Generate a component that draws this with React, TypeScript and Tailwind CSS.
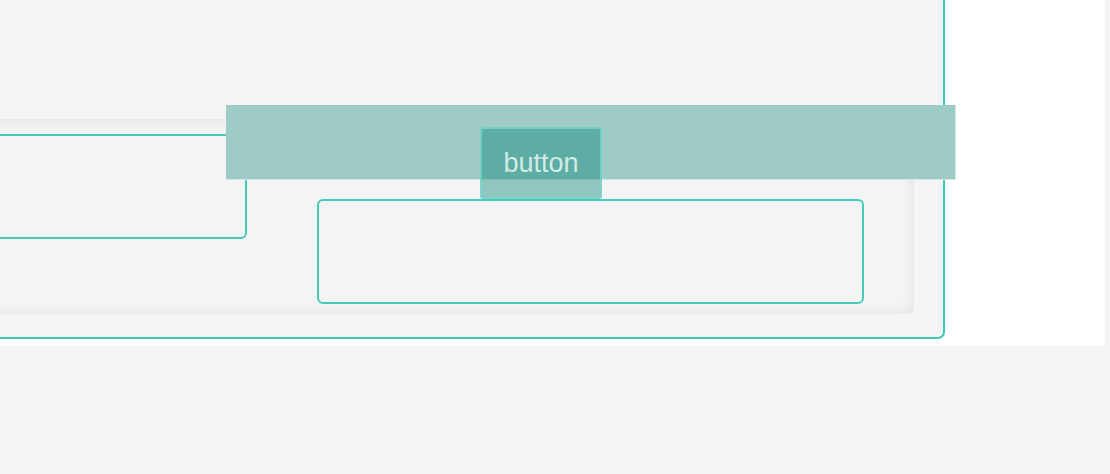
import React from "react";

// panel + inner tray, overlay band and button float on top
export default function App() {
  return (
    <div className="relative w-[1110px] h-[474px] bg-[#f4f4f4] overflow-hidden" style={{ fontFamily: '"Liberation Sans", Arial, sans-serif' }}>
      {/* white stage */}
      <div className="w-[1105px] h-[346px] bg-white overflow-hidden">
        {/* teal framed panel, runs off the top and left */}
        <div className="-ml-[20px] -mt-[20px] w-[965px] h-[359px] bg-[#f4f4f4] border-2 border-[#3fc9b7] rounded-br-[7px] flex flex-col justify-end pb-[23px] pr-[29px]">
          {/* inner tray */}
          <div className="h-[195px] bg-[#f4f4f4] rounded-br-[7px] shadow-[inset_0_0_14px_rgba(0,0,0,0.09)] flex items-start">
            <div className="mt-[15px] w-[265px] h-[105px] border-2 border-[#45cbb9] rounded-r-[6px]" />
            <div className="ml-[70px] mt-[80px] w-[547px] h-[105px] border-2 border-[#45cbb9] rounded-[6px]" />
          </div>
        </div>
      </div>

      {/* overlay band */}
      <div className="absolute left-[226px] top-[105px] w-[730px] h-[75px] bg-[#9ecbc5] border-b border-r border-[#d3e8e5]" />

      {/* button */}
      <div className="absolute left-[480px] top-[127px] w-[122px] h-[72px] rounded-[3px] border-2 border-[#78d6ca]/80 bg-[rgba(4,132,118,0.42)] flex items-center justify-center">
        <span className="text-[27px] leading-none text-[#d3ebe7]">button</span>
      </div>
    </div>
  );
}
